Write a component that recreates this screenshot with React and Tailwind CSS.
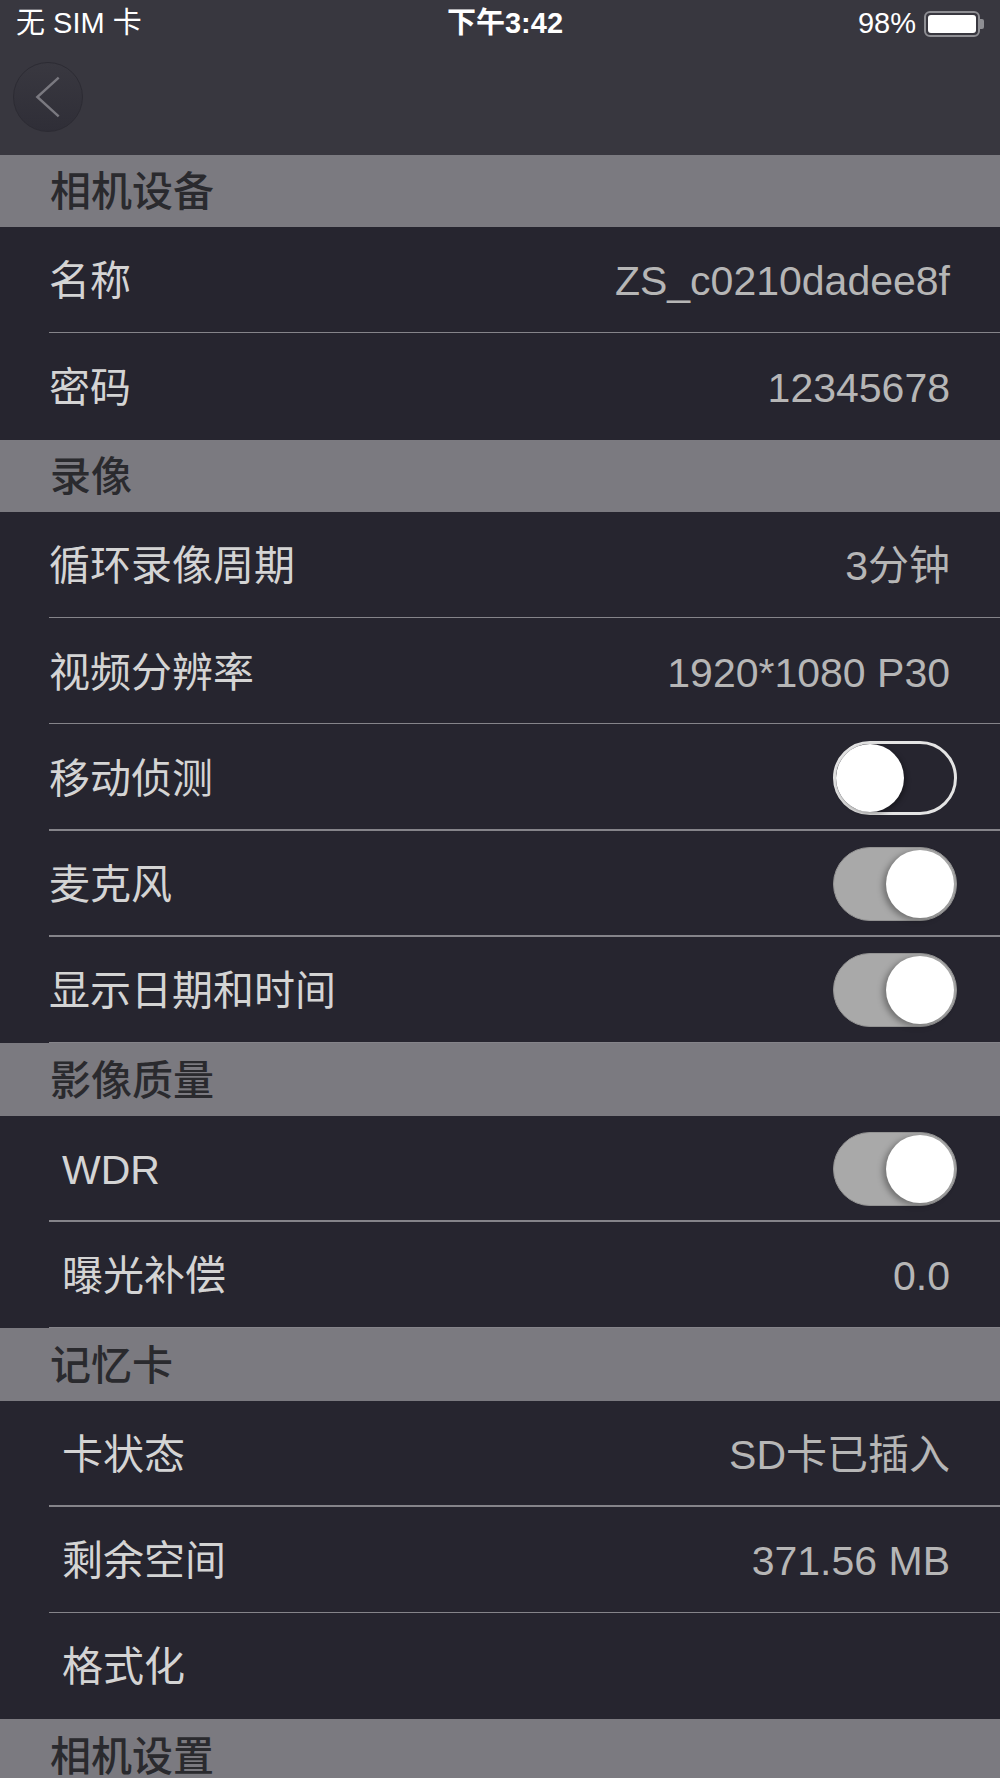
import React from "react";

const sans = { fontFamily: '"Liberation Sans", "Noto Sans CJK SC", sans-serif' };

const sections = [
   {
      title: "相机设备",
      indent: false,
      lastLine: false,
      rows: [
         { label: "名称", value: "ZS_c0210dadee8f" },
         { label: "密码", value: "12345678" },
      ],
   },
   {
      title: "录像",
      indent: false,
      lastLine: true,
      rows: [
         { label: "循环录像周期", value: "3分钟" },
         { label: "视频分辨率", value: "1920*1080 P30" },
         { label: "移动侦测", toggle: false },
         { label: "麦克风", toggle: true },
         { label: "显示日期和时间", toggle: true },
      ],
   },
   {
      title: "影像质量",
      indent: true,
      lastLine: true,
      rows: [
         { label: "WDR", toggle: true },
         { label: "曝光补偿", value: "0.0" },
      ],
   },
   {
      title: "记忆卡",
      indent: true,
      lastLine: false,
      rows: [
         { label: "卡状态", value: "SD卡已插入" },
         { label: "剩余空间", value: "371.56 MB" },
         { label: "格式化" },
      ],
   },
   { title: "相机设置", rows: [] },
];

function Toggle({ on }) {
   if (on) {
      return (
         <div className="relative h-[74px] w-[124px] shrink-0 rounded-full border border-[#939393] bg-[#a9a9a9]">
            <div className="absolute top-[2px] right-[2px] h-[68px] w-[68px] rounded-full bg-white shadow-[-3px_2px_6px_rgba(0,0,0,0.35)]" />
         </div>
      );
   }
   return (
      <div className="relative h-[74px] w-[124px] shrink-0 rounded-full border-[3px] border-[#e4e4e4]">
         <div className="absolute top-0 left-0 h-[68px] w-[68px] rounded-full bg-white shadow-[2px_2px_5px_rgba(0,0,0,0.35)]" />
      </div>
   );
}

function Row({ row, indent, line }) {
   return (
      <div className="relative flex h-[106.26px] items-center justify-between bg-[#26252f]">
         <span className={`${indent ? "pl-[62px]" : "pl-[49px]"} pt-[4px] text-[41px] text-[#d4d4d4]`}>{row.label}</span>
         {row.value && <span className="pt-[4px] pr-[50px] text-[41px] text-[#b6b6b6]">{row.value}</span>}
         {row.toggle !== undefined && (
            <div className="pr-[43px]">
               <Toggle on={row.toggle} />
            </div>
         )}
         {line && <div className="absolute right-0 bottom-0 left-[49px] h-[1.5px] bg-[#85848a]" />}
      </div>
   );
}

export default function App() {
   return (
      <div className="h-[1778px] w-[1000px] overflow-hidden bg-[#26252f]" style={sans}>
         <div className="bg-[#38373f]">
            <div className="flex h-[48.3px] items-center justify-between px-[16px] text-[29px] text-white">
               <span className="w-[300px]">无 SIM 卡</span>
               <span className="pl-[10px] font-semibold">下午3:42</span>
               <div className="flex w-[300px] items-center justify-end gap-[8px]">
                  <span>98%</span>
                  <div className="flex items-center">
                     <div className="flex h-[26px] w-[56px] items-center rounded-[6px] border-[2px] border-[#8e8e93] p-[2px]">
                        <div className="h-full w-full rounded-[3px] bg-white" />
                     </div>
                     <div className="h-[10px] w-[4px] rounded-r-[2px] bg-[#8e8e93]" />
                  </div>
               </div>
            </div>
            <div className="flex h-[106.26px] items-start pt-[14px] pl-[13px]">
               <div className="flex h-[70px] w-[70px] items-center justify-center rounded-full border border-[#2c2b33] bg-gradient-to-b from-[#393840] to-[#2f2e37]">
                  <svg width="70" height="70" viewBox="0 0 70 70">
                     <path d="M46 15 L24 35 L46 55" fill="none" stroke="#7a7980" strokeWidth="2.5" />
                  </svg>
               </div>
            </div>
         </div>

         {sections.map(section => (
            <div key={section.title}>
               <div className="flex h-[72.46px] items-center bg-[#7b7a80] pt-[4px] pl-[50px]">
                  <span className="text-[41px] font-medium text-[#2a2a2e]">{section.title}</span>
               </div>
               {section.rows.map((row, i) => (
                  <Row key={row.label} row={row} indent={section.indent} line={i < section.rows.length - 1 || section.lastLine} />
               ))}
            </div>
         ))}
      </div>
   );
}
